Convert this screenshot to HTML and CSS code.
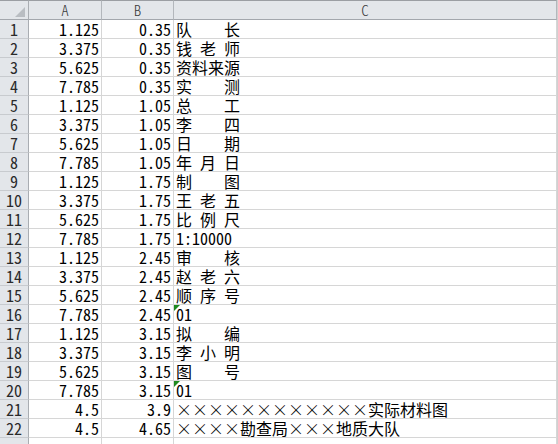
FILE: index.html
```html
<!DOCTYPE html>
<html lang="zh-CN">
<head>
    <meta charset="UTF-8">
    <title>Sheet1</title>
    <link rel="stylesheet" href="styles.css">
</head>
<body>

    <!-- Worksheet grid -->
    <div class="sheet" id="sheet">
        <div class="hd corner"><span class="corner-mark"></span></div>
        <div class="hd col">A</div>
        <div class="hd col">B</div>
        <div class="hd col">C</div>
    </div>

    <script>
        // E = en space, keeps CJK labels spread like the original sheet
        const E = '\u2002';
        const rows = [
            ['1.125', '0.35', '队' + E + E + E + E + '长'],
            ['3.375', '0.35', '钱' + E + '老' + E + '师'],
            ['5.625', '0.35', '资料来源'],
            ['7.785', '0.35', '实' + E + E + E + E + '测'],
            ['1.125', '1.05', '总' + E + E + E + E + '工'],
            ['3.375', '1.05', '李' + E + E + E + E + '四'],
            ['5.625', '1.05', '日' + E + E + E + E + '期'],
            ['7.785', '1.05', '年' + E + '月' + E + '日'],
            ['1.125', '1.75', '制' + E + E + E + E + '图'],
            ['3.375', '1.75', '王' + E + '老' + E + '五'],
            ['5.625', '1.75', '比' + E + '例' + E + '尺'],
            ['7.785', '1.75', '1:10000'],
            ['1.125', '2.45', '审' + E + E + E + E + '核'],
            ['3.375', '2.45', '赵' + E + '老' + E + '六'],
            ['5.625', '2.45', '顺' + E + '序' + E + '号'],
            ['7.785', '2.45', '01', true],
            ['1.125', '3.15', '拟' + E + E + E + E + '编'],
            ['3.375', '3.15', '李' + E + '小' + E + '明'],
            ['5.625', '3.15', '图' + E + E + E + E + '号'],
            ['7.785', '3.15', '01', true],
            ['4.5', '3.9', '××××××××××××实际材料图'],
            ['4.5', '4.65', '××××勘查局×××地质大队'],
            ['', '', '']
        ];

        const sheet = document.getElementById('sheet');

        function cell(cls, text) {
            const div = document.createElement('div');
            div.className = cls;
            div.textContent = text;
            sheet.appendChild(div);
            return div;
        }

        rows.forEach((row, i) => {
            cell('hd rownum', i < 22 ? i + 1 : '');
            cell('c num', row[0]);
            cell('c num', row[1]);
            const c = cell('c text', '');
            // multiplication signs are full width in the sheet font
            row[2].split('').forEach(ch => {
                const s = document.createElement('span');
                s.textContent = ch;
                if (ch === '×') s.className = 'times';
                c.appendChild(s);
            });
            // number-stored-as-text marker
            if (row[3]) {
                const flag = document.createElement('span');
                flag.className = 'flag';
                c.appendChild(flag);
            }
        });
    </script>

</body>
</html>
```

FILE: styles.css
```css
/* Basic Styles */
html, body {
    margin: 0;
    padding: 0;
    background-color: white;
    overflow: hidden;
}

.sheet {
    display: grid;
    grid-template-columns: 29px 73px 72px 383px;
    grid-template-rows: 20px;
    grid-auto-rows: 19px;
    width: 557px;
    border-right: 1px solid #d0d0d0;
    font-family: "Noto Sans CJK SC", sans-serif;
    font-feature-settings: "hwid";
    font-size: 16px;
    color: #000;
}

/* Header cells */
.hd {
    box-sizing: border-box;
    background-color: #e3e6ea;
    border-right: 1px solid #c2c6cb;
    border-bottom: 1px solid #c8cbcf;
    color: #2a2a2a;
    text-align: center;
    line-height: 18px;
}

.hd.col, .hd.corner {
    border-top: 1px solid #9b9ea3;
    border-bottom: 1px solid #a3a7ad;
    border-right-color: #b3b7bc;
    font-size: 15px;
    font-weight: 300;
    color: #3a3a3a;
}

.hd.corner {
    position: relative;
    border-right-color: #a9adb2;
}

.corner-mark {
    position: absolute;
    right: 3px;
    bottom: 2px;
    width: 0;
    height: 0;
    border-left: 10px solid transparent;
    border-bottom: 10px solid #b9bdc2;
}

.hd.rownum {
    border-right-color: #a9adb2;
    font-size: 16px;
}

/* Data cells */
.c {
    box-sizing: border-box;
    border-right: 1px solid #d6d6d6;
    border-bottom: 1px solid #d6d6d6;
    line-height: 18px;
    white-space: pre;
}

.c.num {
    text-align: right;
    padding-right: 2px;
}

.c.text {
    position: relative;
    padding-left: 2px;
}

.times {
    display: inline-block;
    width: 16px;
    text-align: center;
    font-weight: 300;
}

.flag {
    position: absolute;
    left: 0;
    top: 0;
    width: 0;
    height: 0;
    border-top: 6px solid #1f8a1f;
    border-right: 6px solid transparent;
}
```
